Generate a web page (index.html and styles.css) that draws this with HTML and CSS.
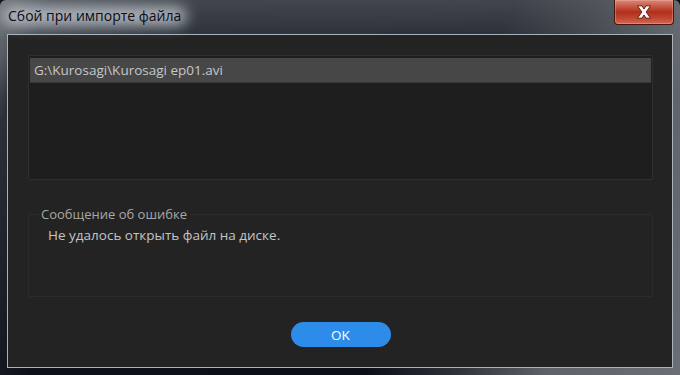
FILE: index.html
```html
<!DOCTYPE html>
<html lang="ru">
<head>
    <meta charset="UTF-8">
    <title>Сбой при импорте файла</title>
    <link rel="stylesheet" href="styles.css">
</head>
<body>
    <div class="window">
        <div class="titlebar">
            <span class="title">Сбой при импорте файла</span>
            <button class="close" type="button" aria-label="Закрыть">
                <svg width="18" height="14" viewBox="0 0 18 14">
                    <path d="M2.5 0.8 L7 0.8 L9 4 L11 0.8 L15.5 0.8 L11.2 7 L15.5 13.2 L11 13.2 L9 10 L7 13.2 L2.5 13.2 L6.8 7 Z"
                          fill="#f6f6f6" stroke="#6a2418" stroke-width="1" stroke-linejoin="round"/>
                </svg>
            </button>
        </div>
        <div class="client">
            <div class="file-list">
                <div class="file-row selected">G:\Kurosagi\Kurosagi ep01.avi</div>
            </div>

            <fieldset class="error-group">
                <legend>Сообщение об ошибке</legend>
                <p class="error-text">Не удалось открыть файл на диске.</p>
            </fieldset>

            <div class="actions">
                <button class="ok-button" type="button">OK</button>
            </div>
        </div>
    </div>
</body>
</html>
```

FILE: styles.css
```css
body {
    margin: 0;
    background-color: #0b0f17;
    font-family: "Open Sans", "Noto Sans", sans-serif;
}

.window {
    width: 680px;
    height: 375px;
    box-sizing: border-box;
    display: flex;
    flex-direction: column;
    padding: 0 7px 7px 7px;
    border-radius: 6px 6px 0 0;
    background:
        linear-gradient(180deg, rgba(120, 125, 132, 0.5) 0%, rgba(0, 0, 0, 0) 25%),
        linear-gradient(112deg, #6e737a 0%, #2c3139 6%, #0c1019 22%, #0a0e16 62%, #2a2e35 72%, #5f6369 84%, #6b6f75 100%);
}

.titlebar {
    height: 34px;
    display: flex;
    align-items: flex-start;
    position: relative;
    isolation: isolate;
}

.title {
    position: relative;
    margin-top: 6px;
    margin-left: 1px;
    font-size: 14px;
    color: #0c0c14;
    line-height: 20px;
}

.title::before {
    content: "";
    position: absolute;
    left: -6px;
    right: -6px;
    top: 0;
    bottom: 0;
    border-radius: 14px;
    background-color: rgba(200, 205, 212, 0.8);
    filter: blur(7px);
    z-index: -1;
}

.close {
    position: absolute;
    right: -1px;
    top: 0;
    width: 60px;
    height: 25px;
    padding: 0;
    border: 1px solid #4a1510;
    border-top: none;
    border-radius: 0 0 4px 4px;
    box-shadow: inset 0 0 0 1px rgba(255, 190, 170, 0.35);
    background: linear-gradient(180deg, #d9897a 0%, #c4533f 30%, #b22f1c 50%, #c04530 75%, #d06a55 100%);
    display: flex;
    align-items: center;
    justify-content: center;
}

.client {
    flex: 1;
    border: 1px solid #a9b3bd;
    background-color: #232323;
    padding: 20px 19px 19px 20px;
    display: flex;
    flex-direction: column;
}

.file-list {
    height: 125px;
    box-sizing: border-box;
    background-color: #1e1e1e;
    border: 1px solid #2f2f2f;
    border-radius: 2px;
    padding: 2px 1px;
}

.file-row {
    height: 25px;
    line-height: 24px;
    padding-left: 4px;
    font-size: 13.5px;
    color: #c6c6c6;
}

.file-row.selected {
    background-color: #474747;
    border-bottom: 1px solid #363636;
    box-sizing: border-box;
}

.error-group {
    margin: 25px 0 0 0;
    height: 92px;
    box-sizing: border-box;
    border: 1px solid #2c2c2c;
    border-radius: 2px;
    padding: 0 0 0 19px;
}

.error-group legend {
    margin-left: -9px;
    padding: 0 4px 0 2px;
    font-size: 13px;
    color: #a8a8a8;
}

.error-text {
    margin: 3px 0 0 0;
    font-size: 13.5px;
    color: #c4c4c4;
}

.actions {
    display: flex;
    justify-content: center;
    margin-top: 25px;
}

.ok-button {
    width: 100px;
    height: 25px;
    border: none;
    border-radius: 13px;
    background-color: #2d8be9;
    color: white;
    font-family: "Open Sans", "Noto Sans", sans-serif;
    font-size: 13.5px;
    padding: 0;
}
```
